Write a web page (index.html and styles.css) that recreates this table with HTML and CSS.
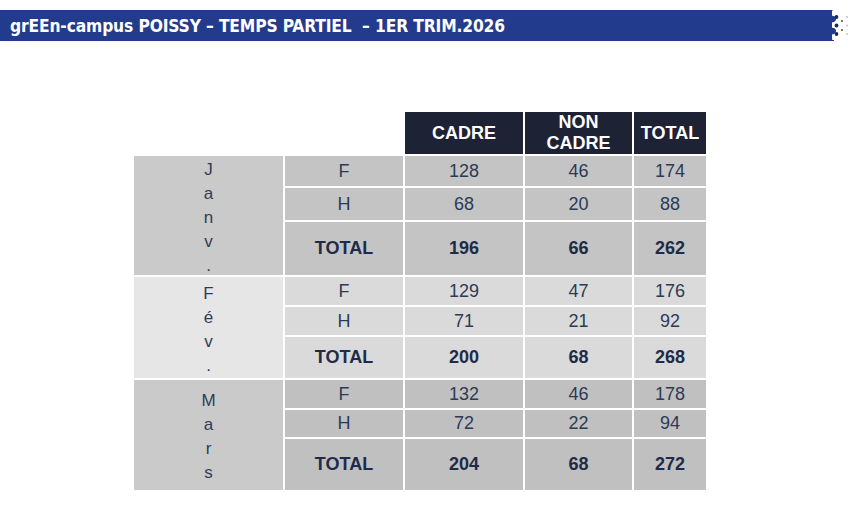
FILE: index.html
```html
<!DOCTYPE html>
<html lang="fr">
<head>
<meta charset="utf-8">
<title>grEEn-campus POISSY – TEMPS PARTIEL</title>
<link rel="stylesheet" href="styles.css">
</head>
<body>
<header class="topbar">
  <div class="bar"><h1 class="title">grEEn-campus POISSY – TEMPS PARTIEL&nbsp; – 1ER TRIM.2026</h1></div>
  <svg class="logo" width="19" height="31" viewBox="0 0 19 31" aria-hidden="true">
    <path d="M0 0 H2 A3 3 0 0 0 2 6 A3.2 3.2 0 0 1 2 12 A3 3 0 0 0 2 18 A3.2 3.2 0 0 1 2 24 A3 3 0 0 0 2 30 V31 H0 Z" fill="#233b8c"/>
    <circle cx="4.5" cy="7" r="1.9" fill="#1c2a55"/>
    <circle cx="4.5" cy="15.5" r="1.9" fill="#1c2a55"/>
    <circle cx="4.5" cy="24" r="1.9" fill="#1c2a55"/>
    <circle cx="10" cy="11" r="1.1" fill="#555a66"/>
    <circle cx="10" cy="20" r="1.1" fill="#555a66"/>
    <circle cx="15" cy="7" r="0.9" fill="#b8bcc6"/>
    <circle cx="15" cy="15.5" r="0.9" fill="#b8bcc6"/>
    <circle cx="15" cy="24" r="0.9" fill="#b8bcc6"/>
  </svg>
</header>

<main class="wrap">
  <div class="grid">
    <div class="blank"></div>
    <div class="blank"></div>
    <div class="head">CADRE</div>
    <div class="head">NON<br>CADRE</div>
    <div class="head">TOTAL</div>

    <div class="month mA r1"><span>J</span><span>a</span><span>n</span><span>v</span><span>.</span></div>
    <div class="cell cA">F</div><div class="cell cA">128</div><div class="cell cA">46</div><div class="cell cA">174</div>
    <div class="cell cA">H</div><div class="cell cA">68</div><div class="cell cA">20</div><div class="cell cA">88</div>
    <div class="cell cA b">TOTAL</div><div class="cell cA b">196</div><div class="cell cA b">66</div><div class="cell cA b">262</div>

    <div class="month mB r2"><span>F</span><span>é</span><span>v</span><span>.</span></div>
    <div class="cell cB">F</div><div class="cell cB">129</div><div class="cell cB">47</div><div class="cell cB">176</div>
    <div class="cell cB">H</div><div class="cell cB">71</div><div class="cell cB">21</div><div class="cell cB">92</div>
    <div class="cell cB b">TOTAL</div><div class="cell cB b">200</div><div class="cell cB b">68</div><div class="cell cB b">268</div>

    <div class="month mA r3"><span>M</span><span>a</span><span>r</span><span>s</span></div>
    <div class="cell cC">F</div><div class="cell cC">132</div><div class="cell cC">46</div><div class="cell cC">178</div>
    <div class="cell cC">H</div><div class="cell cC">72</div><div class="cell cC">22</div><div class="cell cC">94</div>
    <div class="cell cC b">TOTAL</div><div class="cell cC b">204</div><div class="cell cC b">68</div><div class="cell cC b">272</div>
  </div>
</main>
</body>
</html>
```

FILE: styles.css
```css
* { box-sizing: border-box; }
html, body { margin: 0; padding: 0; background: #ffffff; }
body { font-family: "Liberation Sans", Arial, sans-serif; width: 851px; height: 511px; overflow: hidden; }

.topbar { display: flex; align-items: stretch; margin-top: 10px; height: 31px; }
.bar { flex: 0 0 832px; background: #233b8c; display: flex; align-items: center; padding-left: 10px; }
.title {
  margin: 0;
  color: #ffffff;
  font-family: "DejaVu Sans", sans-serif;
  font-stretch: condensed;
  font-weight: bold;
  font-size: 17.3px;
  letter-spacing: -0.15px;
  white-space: pre;
  padding-top: 1px;
}
.logo { display: block; flex: 0 0 auto; }

.wrap { padding: 71px 0 0 134px; }
.grid {
  display: grid;
  grid-template-columns: 149px 118px 118px 107px 72px;
  grid-template-rows: 42px 30px 32px 53px 28px 28px 41px 28px 27px 51px;
  column-gap: 2px;
  row-gap: 2px;
  font-size: 18px;
}
.head {
  background: #1e2235;
  color: #ffffff;
  font-weight: bold;
  display: flex; align-items: center; justify-content: center;
  text-align: center;
  line-height: 21px;
}
.cell {
  display: flex; align-items: center; justify-content: center;
  color: #2c3a55;
}
.cell.b { font-weight: bold; color: #1f2b47; }
.month {
  display: flex; flex-direction: column; align-items: center; justify-content: center;
  color: #2f3d58;
  font-size: 17px;
  line-height: 24px;
  padding-top: 4px;
}
.r1 { grid-row: 2 / span 3; }
.r2 { grid-row: 5 / span 3; }
.r3 { grid-row: 8 / span 3; }
.mA { background: #cacaca; }
.mB { background: #e6e6e6; }
.cA { background: #c4c4c4; }
.cB { background: #dadada; }
.cC { background: #c0c0c0; }
```
